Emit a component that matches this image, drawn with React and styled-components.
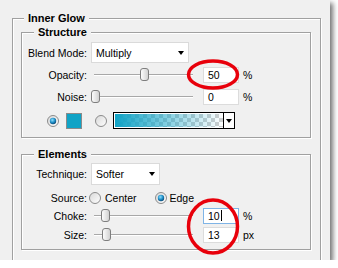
import React from 'react';
import styled, { createGlobalStyle } from 'styled-components';

const GlobalStyle = createGlobalStyle`
  html, body {
    margin: 0;
    padding: 0;
    background: #ffffff;
  }
  body {
    font-family: "Liberation Sans", Arial, sans-serif;
    font-size: 10.5px;
    color: #000;
  }
`;

const Window = styled.div`
  position: relative;
  box-sizing: border-box;
  width: 330px;
  height: 260px;
  padding: 12px 9px 0 12px;
  background: #f0f0f0;
  box-shadow: 3px 3px 5px rgba(0, 0, 0, 0.55);
  overflow: hidden;
`;

const Group = styled.fieldset`
  box-sizing: border-box;
  margin: 0;
  margin-top: ${({ $mt }) => $mt || 0}px;
  padding: ${({ $pad }) => $pad};
  min-inline-size: 0;
  height: ${({ $h }) => ($h ? `${$h}px` : 'auto')};
  border: 1px solid #a0a0a0;
  box-shadow: inset 1px 1px 0 #fff, 1px 1px 0 #fff;
  display: flex;
  flex-direction: column;
`;

const Legend = styled.legend`
  margin-left: ${({ $ml }) => $ml}px;
  padding: 0 4px;
  height: 13px;
  line-height: 13px;
  font-weight: bold;
  font-size: 11px;
  background: #f0f0f0;
`;

const Row = styled.div`
  display: flex;
  align-items: center;
  height: ${({ $h }) => $h || 17}px;
  margin-top: ${({ $mt }) => $mt || 0}px;
  padding-left: ${({ $pl }) => $pl || 0}px;
`;

const Label = styled.div`
  width: 65px;
  text-align: right;
  white-space: nowrap;
  flex-shrink: 0;
`;

const Select = styled.div`
  box-sizing: border-box;
  display: flex;
  align-items: center;
  justify-content: space-between;
  width: ${({ $w }) => $w}px;
  height: ${({ $h }) => $h}px;
  margin-left: 4px;
  padding: 0 4px 0 4px;
  background: #fff;
  border: 1px solid #dadada;
`;

const Arrow = styled.span`
  width: 0;
  height: 0;
  border-left: 3.5px solid transparent;
  border-right: 3.5px solid transparent;
  border-top: 4px solid #000;
`;

const Track = styled.div`
  position: relative;
  width: 99px;
  height: 17px;
  margin-left: 7px;
  flex-shrink: 0;

  &::before {
    content: '';
    position: absolute;
    left: 0;
    right: 0;
    top: 8px;
    height: 1px;
    background: #a8a8a8;
    border-bottom: 1px solid #fff;
  }
`;

const Thumb = styled.svg`
  position: absolute;
  top: 2px;
`;

const NumberBox = styled.div`
  box-sizing: border-box;
  display: flex;
  align-items: center;
  width: 36px;
  height: 16px;
  margin-left: 10px;
  padding-left: 4px;
  background: #fff;
  border: 1px solid ${({ $focus }) => ($focus ? '#7fb4e6' : '#dcdcdc')};
`;

const Caret = styled.span`
  display: inline-block;
  width: 1px;
  height: 11px;
  margin-left: 1px;
  background: #000;
`;

const Unit = styled.span`
  margin-left: 4px;
`;

const Swatch = styled.div`
  box-sizing: border-box;
  width: 16px;
  height: 16px;
  margin-left: ${({ $ml }) => $ml}px;
  background: #10a3c6;
  border: 1px solid #8a8a8a;
`;

const GradientPicker = styled.div`
  box-sizing: border-box;
  display: flex;
  width: 122px;
  height: 17px;
  margin-left: 6px;
  border: 1px solid #000;
  box-shadow: inset 0 0 0 1px #fff;
  background: #fff;
`;

const GradientFill = styled.div`
  flex: 1;
  margin: 1px 0 1px 1px;
  background:
    linear-gradient(to right, rgba(16, 163, 198, 1), rgba(16, 163, 198, 0)),
    repeating-conic-gradient(#cfcfcf 0 25%, #ffffff 0 50%) 0 0 / 8px 8px;
`;

const GradientArrow = styled.div`
  display: flex;
  align-items: center;
  justify-content: center;
  width: 10px;
  border-left: 1px solid #000;
  background: #fff;
`;

const RadioText = styled.span`
  margin-left: ${({ $ml }) => $ml}px;
`;

const Overlay = styled.svg`
  position: absolute;
  left: 0;
  top: 0;
  pointer-events: none;
`;

function Radio({ checked, ml = 0 }) {
  return (
    <svg width="12" height="12" viewBox="0 0 12 12" style={{ marginLeft: ml, flexShrink: 0 }}>
      <defs>
        <linearGradient id={checked ? 'rbOn' : 'rbOff'} x1="0" y1="0" x2="1" y2="1">
          <stop offset="0" stopColor="#d8d8d8" />
          <stop offset="1" stopColor="#ffffff" />
        </linearGradient>
        <radialGradient id="rbDot" cx="0.4" cy="0.35" r="0.7">
          <stop offset="0" stopColor="#8fe0ff" />
          <stop offset="0.55" stopColor="#1f8fc7" />
          <stop offset="1" stopColor="#06406e" />
        </radialGradient>
      </defs>
      <circle cx="6" cy="6" r="5.5" fill={`url(#${checked ? 'rbOn' : 'rbOff'})`} stroke="#8b8b8b" />
      {checked && <circle cx="6" cy="6" r="3.2" fill="url(#rbDot)" />}
    </svg>
  );
}

function Slider({ value }) {
  return (
    <Track>
      <Thumb width="9" height="13" viewBox="0 0 9 13" style={{ left: `calc(${value}% - 4px)` }}>
        <defs>
          <linearGradient id="thumbFill" x1="0" y1="0" x2="1" y2="0">
            <stop offset="0" stopColor="#ffffff" />
            <stop offset="1" stopColor="#cfcfcf" />
          </linearGradient>
        </defs>
        <rect x="0.5" y="0.5" width="8" height="12" rx="2.5" fill="url(#thumbFill)" stroke="#7e7e7e" />
      </Thumb>
    </Track>
  );
}

function SliderRow({ label, value, pos, unit, mt, focus }) {
  return (
    <Row $mt={mt}>
      <Label>{label}</Label>
      <Slider value={pos} />
      <NumberBox $focus={focus}>
        {value}
        {focus && <Caret />}
      </NumberBox>
      <Unit>{unit}</Unit>
    </Row>
  );
}

export default function App() {
  return (
    <>
      <GlobalStyle />
      <Window>
        <Group $pad="0 9px 0 8px" $h={262}>
          <Legend $ml={3}>Inner Glow</Legend>
          <Group $pad="0 0 8px 0" $mt={1}>
            <Legend $ml={12}>Structure</Legend>
            <Row $h={21} $mt={3}>
              <Label>Blend Mode:</Label>
              <Select $w={98} $h={21}>
                Multiply
                <Arrow />
              </Select>
            </Row>
            <SliderRow label="Opacity:" value="50" pos={50} unit="%" mt={3} />
            <SliderRow label="Noise:" value="0" pos={1} unit="%" mt={5} />
            <Row $mt={7} $pl={25}>
              <Radio checked />
              <Swatch $ml={7} />
              <Radio ml={13} />
              <GradientPicker>
                <GradientFill />
                <GradientArrow>
                  <Arrow />
                </GradientArrow>
              </GradientPicker>
            </Row>
          </Group>
          <Group $pad="0 0 6px 0" $mt={10}>
            <Legend $ml={12}>Elements</Legend>
            <Row $h={22} $mt={2}>
              <Label>Technique:</Label>
              <Select $w={69} $h={22}>
                Softer
                <Arrow />
              </Select>
            </Row>
            <Row $mt={4}>
              <Label>Source:</Label>
              <Radio ml={2} />
              <RadioText $ml={4}>Center</RadioText>
              <Radio checked ml={18} />
              <RadioText $ml={3}>Edge</RadioText>
            </Row>
            <SliderRow label="Choke:" value="10" pos={11} unit="%" mt={1} focus />
            <SliderRow label="Size:" value="13" pos={12} unit="px" mt={2} />
          </Group>
        </Group>
        <Overlay width="330" height="260">
          <ellipse cx="213" cy="74.5" rx="24.5" ry="13.5" fill="none" stroke="#e8000b" strokeWidth="3.5" />
          <ellipse cx="213" cy="226.5" rx="24.5" ry="26.5" fill="none" stroke="#e8000b" strokeWidth="3.5" />
        </Overlay>
      </Window>
    </>
  );
}
